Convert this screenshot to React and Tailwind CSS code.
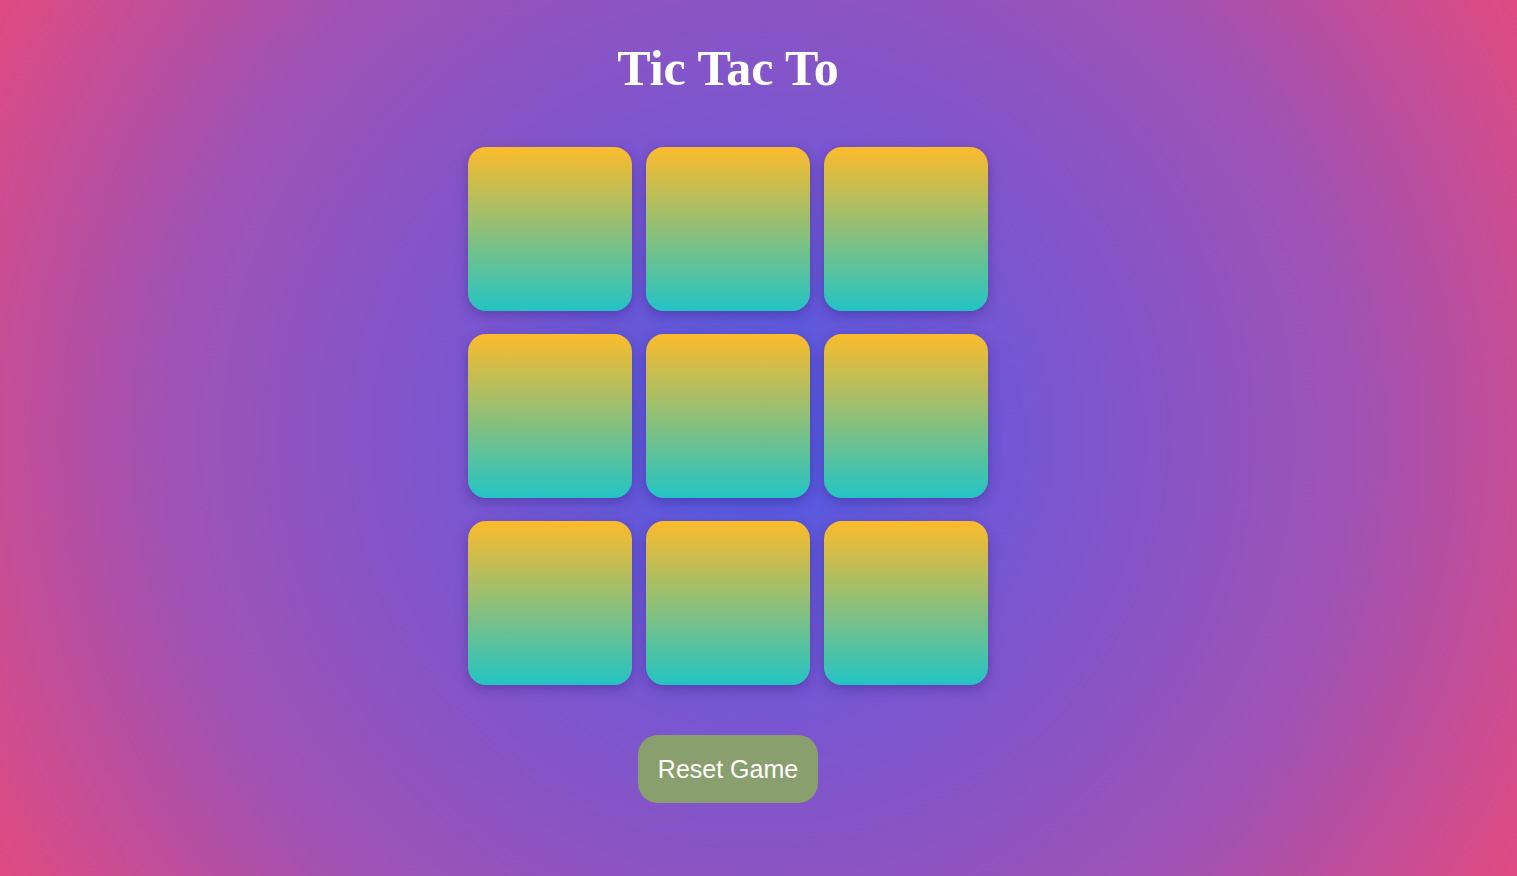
import React, { useState } from "react";

const App = () => {
  const [board, setBoard] = useState(Array(9).fill(""));
  const [turn, setTurn] = useState("X");

  const play = (i) => {
    if (board[i]) return;
    const next = [...board];
    next[i] = turn;
    setBoard(next);
    setTurn(turn === "X" ? "O" : "X");
  };

  const reset = () => {
    setBoard(Array(9).fill(""));
    setTurn("X");
  };

  return (
    <div className="w-full min-h-screen bg-[radial-gradient(circle_at_50%_50%,#4f5ae2_0%,#7a56d0_34%,#a052b4_68%,#e04a80_100%)] flex flex-col items-center pr-[61px] pt-[40px] pb-[73px]">
      {/* TITLE */}
      <h1 className="text-[50px] leading-[56px] font-bold text-white font-['Liberation_Serif','Times_New_Roman',serif]">
        Tic Tac To
      </h1>

      {/* BOARD */}
      <div className="grid grid-cols-[repeat(3,164px)] gap-x-[14px] gap-y-[23px] mt-[51px]">
        {board.map((cell, i) => (
          <button
            key={i}
            onClick={() => play(i)}
            className="w-[164px] h-[164px] rounded-[18px] bg-[linear-gradient(to_bottom,#fcbb2b,#23c4c4)] shadow-[0_4px_12px_rgba(40,20,110,0.35)] flex items-center justify-center text-6xl font-bold text-white cursor-pointer font-['Liberation_Sans',Arial,sans-serif]"
          >
            {cell}
          </button>
        ))}
      </div>

      {/* RESET */}
      <button
        onClick={reset}
        className="mt-[50px] w-[180px] h-[68px] pt-[2px] rounded-[20px] bg-[#8a9f6e] text-white text-[25px] cursor-pointer font-['Liberation_Sans',Arial,sans-serif]"
      >
        Reset Game
      </button>
    </div>
  );
};

export default App;
